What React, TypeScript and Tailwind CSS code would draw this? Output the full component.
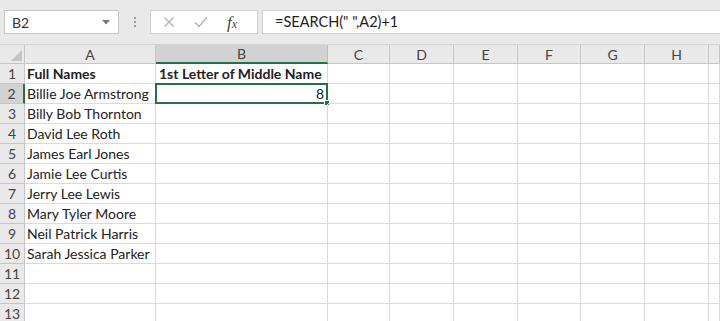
import React from "react";

const font = { fontFamily: "Lato, 'Open Sans', sans-serif" };

const cols = ["A", "B", "C", "D", "E", "F", "G", "H", ""];
const widths = [131, 172, 62, 64, 64, 63, 64, 64, 11];

const names = [
    "Full Names",
    "Billie Joe Armstrong",
    "Billy Bob Thornton",
    "David Lee Roth",
    "James Earl Jones",
    "Jamie Lee Curtis",
    "Jerry Lee Lewis",
    "Mary Tyler Moore",
    "Neil Patrick Harris",
    "Sarah Jessica Parker",
    "",
    "",
    "",
];

function TopBar() {
    return (
        <div className="h-[45px] bg-[#e9e9e9] flex items-start pt-[10px] pl-[4px] border-b border-[#d4d4d4]">
            {/* name box */}
            <div className="w-[115px] h-[24px] bg-white border border-[#c6c6c6] flex items-center justify-between pl-[7px] pr-[8px] text-[14px] text-[#333]">
                <span>B2</span>
                <svg width="8" height="5" viewBox="0 0 8 5"><path d="M0 0 L8 0 L4 4.5 Z" fill="#777" /></svg>
            </div>
            <div className="w-[31px] h-[24px] flex flex-col items-center justify-center gap-[2px]">
                <span className="w-[2px] h-[2px] bg-[#9a9a9a]" />
                <span className="w-[2px] h-[2px] bg-[#9a9a9a]" />
                <span className="w-[2px] h-[2px] bg-[#9a9a9a]" />
            </div>
            {/* cancel / enter / fx */}
            <div className="w-[108px] h-[24px] bg-white border border-[#d0d0d0] flex items-center pl-[12px] gap-[19px]">
                <svg width="12" height="12" viewBox="0 0 12 12"><path d="M1.5 1.5 L10.5 10.5 M10.5 1.5 L1.5 10.5" stroke="#b0b0b0" strokeWidth="1.3" /></svg>
                <svg width="14" height="12" viewBox="0 0 14 12"><path d="M1 6.5 L5 10.5 L13 1.5" stroke="#b0b0b0" strokeWidth="1.3" fill="none" /></svg>
                <span className="text-[17px] italic text-[#444] leading-none" style={{ fontFamily: "'Liberation Serif', serif" }}>f<span className="text-[12px]">x</span></span>
            </div>
            <div className="ml-[4px] flex-1 h-[24px] bg-white border-y border-l border-[#d0d0d0] flex items-center pl-[12px] text-[14.5px] text-[#222]">
                =SEARCH(" ",A2)+1
            </div>
        </div>
    );
}

function Corner() {
    return (
        <div className="w-[25px] h-[19px] bg-[#e9e9e9] border-r border-b border-[#c6c6c6] flex items-end justify-end pr-[2px] pb-[2px]">
            <svg width="11" height="11" viewBox="0 0 11 11"><path d="M11 0 L11 11 L0 11 Z" fill="#c4c4c4" /></svg>
        </div>
    );
}

export default function App() {
    return (
        <div className="w-[720px] h-[321px] overflow-hidden bg-white" style={font}>
            <TopBar />
            {/* column headers */}
            <div className="flex">
                <Corner />
                {cols.map((c, i) => (
                    <div
                        key={i}
                        style={{ width: widths[i] }}
                        className={
                            c === "B"
                                ? "h-[19px] shrink-0 bg-[#d2d2d2] border-r border-[#bcbcbc] border-b-2 border-b-[#217346] flex items-center justify-center text-[14px] text-[#444]"
                                : "h-[19px] shrink-0 bg-[#e9e9e9] border-r border-[#c6c6c6] border-b border-b-[#c6c6c6] flex items-center justify-center text-[14px] text-[#444]"
                        }
                    >
                        {c}
                    </div>
                ))}
            </div>
            {/* rows */}
            {names.map((n, r) => (
                <div key={r} className="flex h-[20px]">
                    <div
                        className={
                            r === 1
                                ? "w-[25px] shrink-0 bg-[#d2d2d2] border-r-2 border-[#217346] border-b border-b-[#c6c6c6] flex items-center justify-center text-[14px] text-[#444]"
                                : "w-[25px] shrink-0 bg-[#e9e9e9] border-r border-[#c6c6c6] border-b border-b-[#c6c6c6] flex items-center justify-center text-[14px] text-[#444]"
                        }
                    >
                        {r + 1}
                    </div>
                    {widths.map((w, i) => (
                        <div
                            key={i}
                            style={{ width: w }}
                            className={
                                "relative shrink-0 border-r border-b border-[#dadada] flex items-center text-[14px] text-[#222] whitespace-nowrap" +
                                (r === 0 && i < 2 ? " font-bold" : "") +
                                (i === 0 ? " pl-[2px]" : " pl-[3px]")
                            }
                        >
                            {i === 0 && n}
                            {i === 1 && r === 0 && "1st Letter of Middle Name"}
                            {i === 1 && r === 1 && (
                                <div className="absolute -left-[1px] -top-[1px] w-[173px] h-[21px] border-2 border-[#217346] flex items-center justify-end pr-[2px]">
                                    8
                                    <span className="absolute -right-[4px] -bottom-[4px] w-[6px] h-[6px] bg-[#217346] border border-white" />
                                </div>
                            )}
                        </div>
                    ))}
                </div>
            ))}
        </div>
    );
}
